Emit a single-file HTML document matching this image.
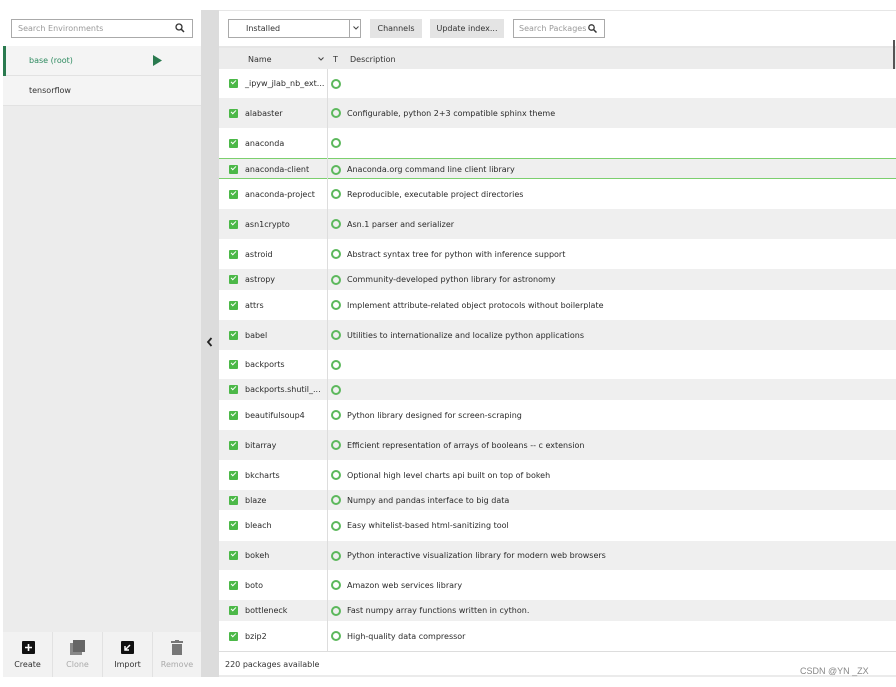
<!DOCTYPE html>
<html><head><meta charset="utf-8"><style>
*{box-sizing:border-box;margin:0;padding:0}
body{width:896px;height:687px;background:#fff;font-family:"DejaVu Sans","Liberation Sans",sans-serif;font-size:8px;color:#333;position:relative;overflow:hidden}
.a{position:absolute}
.row{position:absolute;left:219px;width:677px}
.cb{position:absolute;left:10px;width:9px;height:9px;background:#4cb848;border-radius:1px}
.cb:after{content:"";position:absolute;left:2px;top:1px;width:4px;height:2px;border-left:1.5px solid #fff;border-bottom:1.5px solid #fff;transform:rotate(-45deg)}
.nm{position:absolute;left:26px;white-space:nowrap;color:#2a2a2a}
.ci{position:absolute;left:112px;width:10px;height:10px;border:2px solid #5cb85c;border-radius:50%}
.ds{position:absolute;left:128px;white-space:nowrap;color:#2a2a2a}
.btn{position:absolute;top:632px;height:45px;width:50px;background:#f2f2f2;border-right:1px solid #e2e2e2;text-align:center;font-size:8px}
.btn span{position:absolute;left:0;right:0;top:28px}
</style></head><body>
<div class="a" style="left:3px;top:10px;width:198px;height:667px;background:#ececec"></div>
<div class="a" style="left:3px;top:10px;width:198px;height:36px;background:#fff"></div>
<div class="a" style="left:11px;top:19px;width:182px;height:19px;border:1px solid #aaa;background:#fff;color:#999;padding:4px 6px;font-size:8px">Search Environments</div>
<svg class="a" style="left:175px;top:23px" width="10" height="10"><circle cx="4" cy="4" r="3" fill="none" stroke="#333" stroke-width="1.3"/><line x1="6.2" y1="6.2" x2="9" y2="9" stroke="#333" stroke-width="1.5"/></svg>
<div class="a" style="left:3px;top:46px;width:198px;height:30px;background:#f4f4f4;border-bottom:1px solid #e2e2e2"></div>
<div class="a" style="left:3px;top:46px;width:3px;height:30px;background:#2a7a4f"></div>
<div class="a" style="left:29px;top:56px;color:#2d8a5f">base (root)</div>
<svg class="a" style="left:153px;top:55px" width="9" height="11"><polygon points="0,0 9,5.5 0,11" fill="#2a7a4f"/></svg>
<div class="a" style="left:3px;top:76px;width:198px;height:30px;background:#f4f4f4;border-bottom:1px solid #e2e2e2"></div>
<div class="a" style="left:29px;top:86px">tensorflow</div>
<div class="btn" style="left:3px"><svg class="a" style="left:19px;top:9px" width="13" height="13"><rect width="13" height="13" rx="1" fill="#111"/><path d="M6.5 3v7M3 6.5h7" stroke="#fff" stroke-width="1.6"/></svg><span>Create</span></div>
<div class="btn" style="left:53px;color:#aaa"><svg class="a" style="left:17px;top:8px" width="16" height="16"><rect x="0" y="3" width="12" height="12" fill="#888"/><rect x="3" y="0" width="12" height="12" fill="#666"/></svg><span>Clone</span></div>
<div class="btn" style="left:103px"><svg class="a" style="left:18px;top:9px" width="13" height="13"><rect width="13" height="13" rx="1" fill="#111"/><path d="M9 4L4 9M4 5v4h4" stroke="#fff" stroke-width="1.5" fill="none"/></svg><span>Import</span></div>
<div class="btn" style="left:153px;width:48px;color:#aaa;border-right:none"><svg class="a" style="left:18px;top:8px" width="12" height="15"><rect x="0" y="1" width="12" height="2" fill="#777"/><rect x="4" y="0" width="4" height="2" fill="#777"/><rect x="1" y="4" width="10" height="11" fill="#777"/></svg><span>Remove</span></div>
<div class="a" style="left:201px;top:10px;width:18px;height:667px;background:#dcdcdc"></div>
<svg class="a" style="left:206px;top:337px" width="7" height="10"><path d="M5.5 1L2 5l3.5 4" stroke="#222" stroke-width="1.8" fill="none"/></svg>
<div class="a" style="left:219px;top:10px;width:677px;height:1px;background:#e6e6e6"></div>
<div class="a" style="left:228px;top:19px;width:133px;height:19px;border:1px solid #aaa;background:#fff;padding:4px 17px">Installed</div>
<div class="a" style="left:349px;top:19px;width:1px;height:19px;background:#aaa"></div>
<svg class="a" style="left:353px;top:26px" width="6" height="4"><path d="M0.5 0.5L3 3l2.5-2.5" stroke="#444" stroke-width="1" fill="none"/></svg>
<div class="a" style="left:370px;top:19px;width:52px;height:19px;background:#e4e4e4;text-align:center;padding-top:5px">Channels</div>
<div class="a" style="left:430px;top:19px;width:74px;height:19px;background:#e4e4e4;text-align:center;padding-top:5px">Update index...</div>
<div class="a" style="left:513px;top:19px;width:92px;height:19px;border:1px solid #aaa;color:#999;padding:4px 5px">Search Packages</div>
<svg class="a" style="left:588px;top:24px" width="9" height="9"><circle cx="3.5" cy="3.5" r="2.7" fill="none" stroke="#333" stroke-width="1.3"/><line x1="5.5" y1="5.5" x2="8.5" y2="8.5" stroke="#333" stroke-width="1.5"/></svg>
<div class="a" style="left:219px;top:46px;width:677px;height:2px;background:#e6e6e6"></div>
<div class="a" style="left:219px;top:48px;width:677px;height:21px;background:#ececec"></div>
<div class="a" style="left:248px;top:55px">Name</div>
<svg class="a" style="left:318px;top:57px" width="6" height="4"><path d="M0.5 0.5L3 3l2.5-2.5" stroke="#444" stroke-width="1" fill="none"/></svg>
<div class="a" style="left:333px;top:55px">T</div>
<div class="a" style="left:350px;top:55px">Description</div>
<div class="a" style="left:893px;top:40px;width:2px;height:96px;background:#555"></div>
<div id="rows"></div>
<div class="a" style="left:327px;top:69px;width:1px;height:582px;background:#ddd"></div>
<div class="a" style="left:219px;top:651px;width:677px;height:1px;background:#ddd"></div>
<div class="a" style="left:225px;top:660px">220 packages available</div>
<div class="a" style="left:219px;top:675px;width:677px;height:2px;background:#ebebeb"></div>
<div class="a" style="left:800px;top:666px;color:#888;font-family:'Liberation Sans',sans-serif;font-size:9px">CSDN @YN _ZX</div>
<script>
var d=[["_ipyw_jlab_nb_ext...","",69,98],["alabaster","Configurable, python 2+3 compatible sphinx theme",98,128],["anaconda","",128,158],["anaconda-client","Anaconda.org command line client library",158,179],["anaconda-project","Reproducible, executable project directories",179,209],["asn1crypto","Asn.1 parser and serializer",209,239],["astroid","Abstract syntax tree for python with inference support",239,269],["astropy","Community-developed python library for astronomy",269,290],["attrs","Implement attribute-related object protocols without boilerplate",290,320],["babel","Utilities to internationalize and localize python applications",320,350],["backports","",350,379],["backports.shutil_...","",379,400],["beautifulsoup4","Python library designed for screen-scraping",400,430],["bitarray","Efficient representation of arrays of booleans -- c extension",430,460],["bkcharts","Optional high level charts api built on top of bokeh",460,490],["blaze","Numpy and pandas interface to big data",490,510],["bleach","Easy whitelist-based html-sanitizing tool",510,541],["bokeh","Python interactive visualization library for modern web browsers",541,570],["boto","Amazon web services library",570,600],["bottleneck","Fast numpy array functions written in cython.",600,621],["bzip2","High-quality data compressor",621,651]];
var h="";d.forEach(function(r,i){var ht=r[3]-r[2],c=(ht-9)/2,t=(ht-11)/2+1;
var bg=i%2?"#efefef":"#fff";var bd=i==3?"border-top:1px solid #7ccf6e;border-bottom:1px solid #7ccf6e;":"";
h+='<div class="row" style="top:'+r[2]+'px;height:'+ht+'px;background:'+bg+';'+bd+'"><div class="cb" style="top:'+c+'px"></div><div class="nm" style="top:'+t+'px">'+r[0]+'</div><div class="ci" style="top:'+((ht-10)/2)+'px"></div><div class="ds" style="top:'+t+'px">'+r[1]+'</div></div>';});
document.getElementById("rows").innerHTML=h;
</script>
</body></html>
